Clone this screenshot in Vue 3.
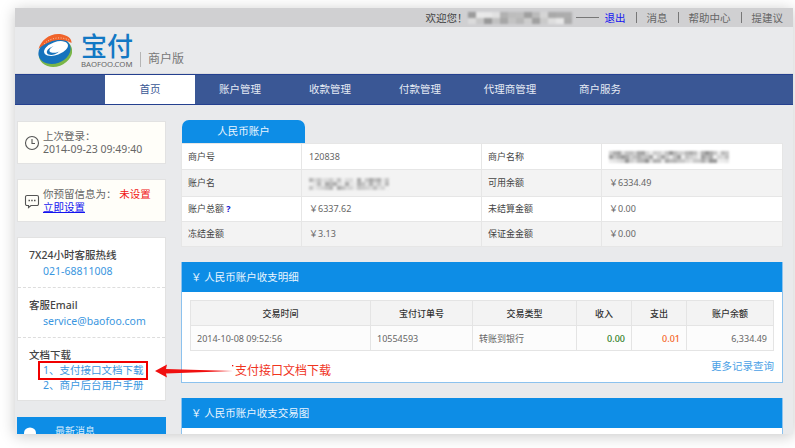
<template>
  <div class="page">
    <div class="window">
      <div class="topbar">
        <span class="dark">欢迎您！</span>
        <span class="pixels user-blur">
          <i v-for="(c, i) in userCells" :key="i" :style="{ background: c }"></i>
        </span>
        <span class="dash"></span>
        <a class="logout">退出</a>
        <span class="sep"></span>
        <span>消息</span>
        <span class="sep"></span>
        <span>帮助中心</span>
        <span class="sep"></span>
        <span>提建议</span>
      </div>

      <div class="header">
        <svg class="logo" viewBox="0 0 34 35" width="34" height="35">
          <ellipse cx="17.5" cy="20" rx="17" ry="13.5" transform="rotate(-20 17.5 20)" fill="#7ab648" />
          <ellipse cx="16.5" cy="18" rx="16.5" ry="12.5" transform="rotate(-20 16.5 18)" fill="#1673bd" />
          <ellipse cx="18" cy="15.5" rx="12.5" ry="6.5" transform="rotate(-20 18 15.5)" fill="#fff" />
          <ellipse cx="15.5" cy="17.5" rx="7" ry="4" transform="rotate(-20 15.5 17.5)" fill="#1673bd" />
          <ellipse cx="19" cy="15.5" rx="8" ry="3.6" transform="rotate(-20 19 15.5)" fill="#fff" />
          <path d="M0.5 16C3 7 12 0 22 1C29 2 34 5 33.5 10C28 6.5 19 6 12 9C7 11 3 13 0.5 16Z" fill="#f0632a" />
          <path d="M6 11C12 5 22 3 31 7" fill="none" stroke="#fbd9c4" stroke-width="0.8" stroke-dasharray="1 1.6" />
        </svg>
        <div class="brand">
          <span class="brand-cn">宝付</span>
          <span class="brand-en">BAOFOO.COM</span>
        </div>
        <span class="brand-sep"></span>
        <span class="brand-sub">商户版</span>
      </div>

      <nav class="nav">
        <a v-for="(item, i) in navItems" :key="item" class="nav-item" :class="{ active: i === 0 }">{{ item }}</a>
      </nav>

      <div class="main">
        <aside class="side">
          <div class="note">
            <svg class="note-icon" viewBox="0 0 16 16" width="16" height="16">
              <circle cx="8" cy="8" r="6.5" fill="none" stroke="#555" stroke-width="1.1" />
              <path d="M8 4v4.5h3" fill="none" stroke="#555" stroke-width="1.1" />
            </svg>
            <div>
              <div>上次登录：</div>
              <div>2014-09-23 09:49:40</div>
            </div>
          </div>
          <div class="note">
            <svg class="note-icon" viewBox="0 0 16 16" width="16" height="16">
              <path d="M3 2.5h10a1.5 1.5 0 0 1 1.5 1.5v7a1.5 1.5 0 0 1-1.5 1.5H7L4.5 14.5V12.5H3A1.5 1.5 0 0 1 1.5 11V4A1.5 1.5 0 0 1 3 2.5Z" fill="none" stroke="#555" stroke-width="1.1" />
              <path d="M4.5 7.5h1.5M7.2 7.5h1.5M10 7.5h1.5" stroke="#555" stroke-width="1.4" />
            </svg>
            <div>
              <div>你预留信息为： <span class="red">未设置</span></div>
              <a class="blue-link">立即设置</a>
            </div>
          </div>

          <div class="contact">
            <section>
              <h4>7X24小时客服热线</h4>
              <p class="phone">021-68811008</p>
            </section>
            <section>
              <h4>客服Email</h4>
              <p class="phone">service@baofoo.com</p>
            </section>
            <section class="docs">
              <h4>文档下载</h4>
              <p class="doc doc-hot">1、支付接口文档下载</p>
              <p class="doc">2、商户后台用户手册</p>
            </section>
          </div>

          <div class="news">
            <svg viewBox="0 0 16 16" width="16" height="16">
              <ellipse cx="7" cy="6" rx="6" ry="5.5" fill="#fff" />
              <path d="M3 11h10l2 5H1Z" fill="#fff" />
            </svg>
            <span>最新消息</span>
          </div>
        </aside>

        <div class="content">
          <div class="tab">人民币账户</div>
          <table class="account">
            <colgroup>
              <col class="c1" /><col class="c2" /><col class="c3" /><col />
            </colgroup>
            <tbody>
              <tr>
                <td>商户号</td>
                <td class="num">120838</td>
                <td>商户名称</td>
                <td class="num">
                  <span class="pixels name-blur">
                    <i v-for="(c, i) in nameCells" :key="i" :style="{ background: c }"></i>
                  </span>
                </td>
              </tr>
              <tr>
                <td>账户名</td>
                <td class="num">
                  <span class="pixels acct-blur">
                    <i v-for="(c, i) in acctCells" :key="i" :style="{ background: c }"></i>
                  </span>
                </td>
                <td>可用余额</td>
                <td class="num">￥6334.49</td>
              </tr>
              <tr>
                <td>账户总额 <b class="help">?</b></td>
                <td class="num">￥6337.62</td>
                <td>未结算金额</td>
                <td class="num">￥0.00</td>
              </tr>
              <tr>
                <td>冻结金额</td>
                <td class="num">￥3.13</td>
                <td>保证金金额</td>
                <td class="num">￥0.00</td>
              </tr>
            </tbody>
          </table>

          <div class="panel">
            <div class="panel-head">￥ 人民币账户收支明细</div>
            <div class="panel-body">
              <table class="records">
                <colgroup>
                  <col class="r1" /><col class="r2" /><col class="r3" /><col class="r4" /><col class="r5" /><col />
                </colgroup>
                <thead>
                  <tr>
                    <th>交易时间</th><th>宝付订单号</th><th>交易类型</th><th>收入</th><th>支出</th><th>账户余额</th>
                  </tr>
                </thead>
                <tbody>
                  <tr>
                    <td>2014-10-08 09:52:56</td>
                    <td>10554593</td>
                    <td>转账到银行</td>
                    <td class="right income">0.00</td>
                    <td class="right outgo">0.01</td>
                    <td class="right">6,334.49</td>
                  </tr>
                </tbody>
              </table>
              <a class="more">更多记录查询</a>
            </div>
          </div>

          <div class="panel last">
            <div class="panel-head">￥ 人民币账户收支交易图</div>
            <div class="panel-body"></div>
          </div>
        </div>
      </div>
    </div>

    <!-- 标注箭头 -->
    <svg class="arrow" viewBox="0 0 80 16" width="80" height="16">
      <path d="M0 8L12 1.5L11 6L78 8L11 10.5L12 14.5Z" fill="#f01010" />
      <rect x="77" y="2" width="1.3" height="1.3" fill="#f01010" />
    </svg>
    <span class="callout">支付接口文档下载</span>
  </div>
</template>

<script setup>
const navItems = ['首页', '账户管理', '收款管理', '付款管理', '代理商管理', '商户服务']

// 打码区域用的灰度块
const makeCells = (count, seed, low, high) => {
  const cells = []
  let n = seed
  for (let i = 0; i < count; i++) {
    n = (n * 137 + 61) % 251
    const v = Math.round(low + (n / 251) * (high - low))
    cells.push(`rgb(${v},${v},${v})`)
  }
  return cells
}

const userCells = makeCells(26, 7, 150, 235)
const nameCells = makeCells(90, 19, 150, 240)
const acctCells = makeCells(60, 31, 170, 245)
</script>

<style>
html,
body {
  margin: 0;
  background: #fff;
}
</style>

<style scoped>
.page {
  position: relative;
  width: 795px;
  height: 448px;
  box-sizing: border-box;
  padding: 8px 2px 0 15px;
  overflow: hidden;
  background: #fff;
  font-family: "Noto Sans", "Noto Sans CJK SC", sans-serif;
  font-size: 9px;
  color: #555;
}

.window {
  height: 426px;
  overflow: hidden;
  background: #e9eaec;
  box-shadow: 0 2px 14px rgba(0, 0, 0, 0.22);
}

.topbar {
  display: flex;
  align-items: center;
  justify-content: flex-end;
  gap: 10px;
  height: 19px;
  padding-right: 10px;
  background: #d0d0d2;
  font-size: 10.5px;
  color: #666;
}

.topbar .dark {
  margin-right: -10px;
  color: #444;
}

.logout {
  color: #1414f0;
  margin-left: -4px;
}

.dash {
  width: 23px;
  height: 1px;
  margin-left: -6px;
  background: #777;
}

.sep {
  width: 1px;
  height: 11px;
  background: #777;
}

.pixels {
  display: inline-flex;
  flex-wrap: wrap;
  overflow: hidden;
  filter: blur(0.8px);
  vertical-align: middle;
}

.pixels i {
  display: block;
  width: 4px;
  height: 4px;
}

.user-blur {
  width: 104px;
  height: 12px;
}

.user-blur i {
  width: 8px;
  height: 6px;
}

.name-blur {
  width: 120px;
  height: 12px;
}

.acct-blur {
  width: 80px;
  height: 12px;
}

.header {
  display: flex;
  align-items: flex-start;
  height: 47px;
  padding-left: 23px;
  box-sizing: border-box;
  border-bottom: 1px solid #dcdde0;
}

.logo {
  margin-top: 6px;
  flex: none;
}

.brand {
  display: flex;
  flex-direction: column;
  gap: 1px;
  margin: 6px 0 0 9px;
  width: 53px;
}

.brand-cn {
  font-size: 26px;
  line-height: 26px;
  font-weight: 500;
  color: #1278c4;
}

.brand-en {
  font-size: 7.8px;
  line-height: 8px;
  white-space: nowrap;
  color: #666;
}

.brand-sep {
  width: 1px;
  height: 15px;
  margin: 25px 7px 0 6px;
  background: #b5b5b5;
}

.brand-sub {
  margin-top: 23px;
  font-size: 12px;
  line-height: 18px;
  color: #777;
}

.nav {
  display: flex;
  height: 31px;
  box-sizing: border-box;
  padding-left: 90px;
  border-top: 1px solid #24408f;
  border-bottom: 1px solid #24408f;
  background: #3a5795;
}

.nav-item {
  width: 90px;
  line-height: 29px;
  text-align: center;
  font-size: 10.5px;
  color: #e6ebf4;
}

.nav-item.active {
  background: #fff;
  color: #3a5795;
}

.main {
  display: flex;
  gap: 15px;
  padding: 15px 10px 0 2px;
}

.side {
  width: 149px;
  flex: none;
  margin-top: 1px;
}

.note {
  display: flex;
  align-items: center;
  gap: 3px;
  height: 43px;
  box-sizing: border-box;
  margin-bottom: 15px;
  padding-left: 6px;
  border: 1px solid #e2e2e2;
  background: #fffef9;
  font-size: 10.5px;
  line-height: 13px;
  color: #666;
}

.note-icon {
  flex: none;
}

.red {
  color: #f01414;
}

.blue-link {
  color: #1414f0;
  text-decoration: underline;
}

.contact {
  height: 164px;
  box-sizing: border-box;
  border: 1px solid #e2e2e2;
  background: #fff;
}

.contact section {
  height: 50px;
  padding: 9px 0 0 11px;
  box-sizing: border-box;
  border-bottom: 1px dashed #ddd;
}

.contact .docs {
  border-bottom: 0;
}

.contact h4 {
  margin: 0;
  font-size: 10.5px;
  line-height: 16px;
  font-weight: 500;
  color: #444;
}

.phone {
  margin: 0 0 0 14px;
  font-size: 10.5px;
  line-height: 16px;
  color: #3a96e0;
}

.doc {
  margin: 0 0 0 14px;
  font-size: 10.5px;
  line-height: 15px;
  white-space: nowrap;
  color: #3a96e0;
}

.doc-hot {
  position: relative;
}

.doc-hot::before {
  content: "";
  position: absolute;
  left: -5px;
  top: -2.5px;
  width: 106px;
  height: 15px;
  border: 2px solid #f00000;
}

.news {
  display: flex;
  align-items: flex-start;
  gap: 16px;
  height: 30px;
  margin-top: 16px;
  padding: 6px 0 0 6px;
  box-sizing: border-box;
  background: #0d8de6;
  font-size: 10px;
  color: #dceefc;
}

.news svg {
  margin-top: 4px;
}

.content {
  width: 602px;
  flex: none;
}

.tab {
  width: 123px;
  height: 23px;
  margin-left: 1px;
  line-height: 23px;
  text-align: center;
  border-radius: 7px 7px 0 0;
  background: #0d8de6;
  font-size: 10.5px;
  color: #eaf5fe;
}

table {
  border-collapse: collapse;
  table-layout: fixed;
}

.account {
  width: 602px;
  height: 104px;
  border: 1.5px solid #5aa9e6;
  background: #fff;
}

.account .c1 {
  width: 120px;
}

.account .c2 {
  width: 180px;
}

.account .c3 {
  width: 120px;
}

.account td {
  padding: 0 6px;
  border: 1px solid #e6e6e6;
  color: #444;
}

.account td.num {
  padding-left: 7px;
  color: #666;
}

.account tr:nth-child(even) td {
  background: #f3f3f3;
}

.help {
  color: #1414d0;
}

.panel {
  margin-top: 15px;
  border: 1px solid #8cc2ee;
  border-top: 0;
  background: #fff;
}

.panel-head {
  height: 30px;
  padding-left: 9px;
  line-height: 30px;
  background: #0d8de6;
  font-size: 10.5px;
  color: #eaf5fe;
}

.panel-body {
  position: relative;
  height: 90px;
  padding: 8px 8px 0;
  box-sizing: border-box;
}

.records {
  width: 584px;
}

.records .r1 {
  width: 180px;
}

.records .r2 {
  width: 102px;
}

.records .r3 {
  width: 104px;
}

.records .r4,
.records .r5 {
  width: 55px;
}

.records th,
.records td {
  height: 24px;
  padding: 0 6px;
  border: 1px solid #e4e4e4;
  font-size: 9px;
}

.records th {
  background: #f3f3f3;
  font-weight: 500;
  color: #333;
}

.records td {
  background: #fcfcfc;
  color: #666;
}

.records td.right {
  text-align: right;
}

.records td.income {
  color: #2f7d1e;
  font-weight: 500;
}

.records td.outgo {
  color: #f5641e;
  font-weight: 500;
}

.more {
  display: block;
  margin-top: 7px;
  text-align: right;
  font-size: 10.5px;
  line-height: 16px;
  color: #4a9fe6;
}

.arrow {
  position: absolute;
  left: 155px;
  top: 363px;
}

.callout {
  position: absolute;
  left: 235px;
  top: 362px;
  font-size: 12px;
  line-height: 18px;
  color: #f0341e;
}
</style>
